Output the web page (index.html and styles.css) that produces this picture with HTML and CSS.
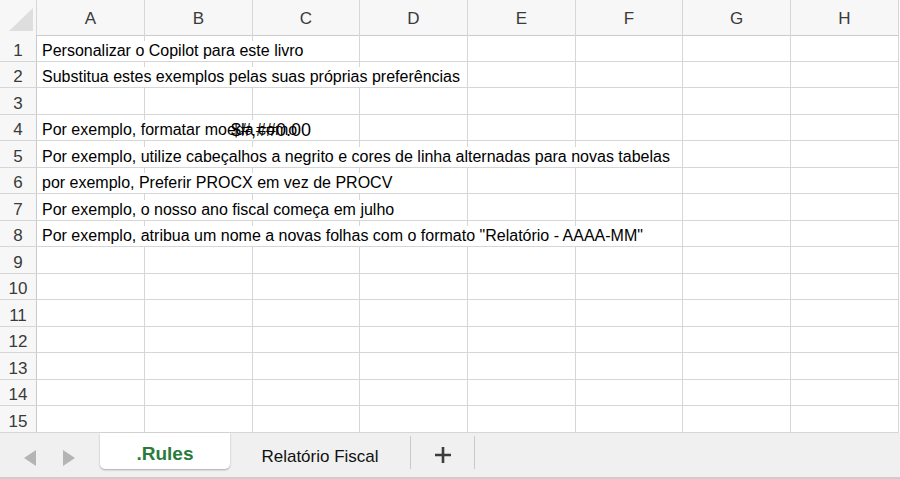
FILE: index.html
```html
<!DOCTYPE html>
<html>
    <head>
        <meta charset="utf-8">
        <title>.Rules</title>
        <link rel="stylesheet" href="styles.css">
    </head>
    <body>
        <div class="sheet">
            <div class="row head">
                <div class="corner">
                    <svg width="37" height="35" viewBox="0 0 37 35"><polygon points="33,8 33,31 9,31" fill="#dedede"/></svg>
                </div>
                <div class="ch">A</div><div class="ch">B</div><div class="ch">C</div><div class="ch">D</div>
                <div class="ch">E</div><div class="ch">F</div><div class="ch">G</div><div class="ch">H</div>
            </div>

            <div class="row">
                <div class="rh">1</div>
                <div class="c"><span class="txt">Personalizar o Copilot para este livro</span></div>
                <div class="c"></div><div class="c"></div><div class="c"></div><div class="c"></div><div class="c"></div><div class="c"></div><div class="c"></div>
            </div>
            <div class="row">
                <div class="rh">2</div>
                <div class="c"><span class="txt">Substitua estes exemplos pelas suas próprias preferências</span></div>
                <div class="c"></div><div class="c"></div><div class="c"></div><div class="c"></div><div class="c"></div><div class="c"></div><div class="c"></div>
            </div>
            <div class="row">
                <div class="rh">3</div>
                <div class="c"></div><div class="c"></div><div class="c"></div><div class="c"></div><div class="c"></div><div class="c"></div><div class="c"></div><div class="c"></div>
            </div>
            <div class="row">
                <div class="rh">4</div>
                <div class="c"><span class="txt">Por exemplo, formatar moeda como</span></div>
                <div class="c"><span class="fmt">$#,##0.00</span></div>
                <div class="c"></div><div class="c"></div><div class="c"></div><div class="c"></div><div class="c"></div><div class="c"></div>
            </div>
            <div class="row">
                <div class="rh">5</div>
                <div class="c"><span class="txt">Por exemplo, utilize cabeçalhos a negrito e cores de linha alternadas para novas tabelas</span></div>
                <div class="c"></div><div class="c"></div><div class="c"></div><div class="c"></div><div class="c"></div><div class="c"></div><div class="c"></div>
            </div>
            <div class="row">
                <div class="rh">6</div>
                <div class="c"><span class="txt">por exemplo, Preferir PROCX em vez de PROCV</span></div>
                <div class="c"></div><div class="c"></div><div class="c"></div><div class="c"></div><div class="c"></div><div class="c"></div><div class="c"></div>
            </div>
            <div class="row">
                <div class="rh">7</div>
                <div class="c"><span class="txt">Por exemplo, o nosso ano fiscal começa em julho</span></div>
                <div class="c"></div><div class="c"></div><div class="c"></div><div class="c"></div><div class="c"></div><div class="c"></div><div class="c"></div>
            </div>
            <div class="row">
                <div class="rh">8</div>
                <div class="c"><span class="txt">Por exemplo, atribua um nome a novas folhas com o formato "Relatório - AAAA-MM"</span></div>
                <div class="c"></div><div class="c"></div><div class="c"></div><div class="c"></div><div class="c"></div><div class="c"></div><div class="c"></div>
            </div>
            <div class="row"><div class="rh">9</div><div class="c"></div><div class="c"></div><div class="c"></div><div class="c"></div><div class="c"></div><div class="c"></div><div class="c"></div><div class="c"></div></div>
            <div class="row"><div class="rh">10</div><div class="c"></div><div class="c"></div><div class="c"></div><div class="c"></div><div class="c"></div><div class="c"></div><div class="c"></div><div class="c"></div></div>
            <div class="row"><div class="rh">11</div><div class="c"></div><div class="c"></div><div class="c"></div><div class="c"></div><div class="c"></div><div class="c"></div><div class="c"></div><div class="c"></div></div>
            <div class="row"><div class="rh">12</div><div class="c"></div><div class="c"></div><div class="c"></div><div class="c"></div><div class="c"></div><div class="c"></div><div class="c"></div><div class="c"></div></div>
            <div class="row"><div class="rh">13</div><div class="c"></div><div class="c"></div><div class="c"></div><div class="c"></div><div class="c"></div><div class="c"></div><div class="c"></div><div class="c"></div></div>
            <div class="row"><div class="rh">14</div><div class="c"></div><div class="c"></div><div class="c"></div><div class="c"></div><div class="c"></div><div class="c"></div><div class="c"></div><div class="c"></div></div>
            <div class="row"><div class="rh">15</div><div class="c"></div><div class="c"></div><div class="c"></div><div class="c"></div><div class="c"></div><div class="c"></div><div class="c"></div><div class="c"></div></div>
        </div>

        <div class="tabs">
            <div class="nav">
                <svg width="14" height="18" viewBox="0 0 14 18"><polygon points="13,1 13,17 1,9" fill="#b4b4b4"/></svg>
                <svg width="14" height="18" viewBox="0 0 14 18"><polygon points="1,1 1,17 13,9" fill="#b4b4b4"/></svg>
            </div>
            <div class="tab active">.Rules</div>
            <div class="tab">Relatório Fiscal</div>
            <div class="tab add">
                <svg width="18" height="18" viewBox="0 0 18 18"><path d="M9 1v16M1 9h16" stroke="#3c3c3c" stroke-width="2.6"/></svg>
            </div>
        </div>
    </body>
</html>
```

FILE: styles.css
```css
html, body {
    margin: 0;
    padding: 0;
    background: #fff;
    font-family: "Liberation Sans", Arial, sans-serif;
    overflow: hidden;
}

/* grade da folha */
.sheet {
    width: 900px;
}
.row {
    display: grid;
    grid-template-columns: 37px 108px 108px 107px 108px 108px 107px 108px 108px;
    height: 26.5px;
}
.row.head {
    height: 35px;
}
.row > div {
    box-sizing: border-box;
    border-right: 1px solid #d6d6d6;
    border-bottom: 1px solid #d6d6d6;
}
.corner, .ch, .rh {
    background: #f7f7f7;
    color: #3a3a3a;
    font-size: 17px;
}
.corner svg {
    display: block;
}
.head > div {
    border-bottom-color: #cbcbcb;
}
.ch {
    display: flex;
    justify-content: center;
    align-items: center;
    padding-top: 3px;
}
.rh {
    display: flex;
    justify-content: center;
    align-items: flex-end;
    line-height: 19px;
    padding-bottom: 1px;
    border-right-color: #cbcbcb !important;
}
.c {
    display: flex;
    align-items: flex-end;
    white-space: nowrap;
    min-width: 0;
    font-size: 16px;
    line-height: 19px;
    color: #000;
}
/* texto que transborda para as células vizinhas */
.txt {
    position: relative;
    z-index: 1;
    padding: 0 2px 1px 5px;
    background: #fff;
}
.c .fmt {
    position: relative;
    z-index: 2;
    margin-left: 86px;
    margin-bottom: 0;
    font-size: 18px;
    line-height: 20px;
}

/* separadores das folhas */
.tabs {
    display: flex;
    height: 46px;
    box-sizing: border-box;
    background: #f0f0f0;
    border-bottom: 2px solid #cdcdcd;
}
.nav {
    width: 100px;
    display: flex;
    align-items: center;
    gap: 25px;
    padding: 6px 0 0 23px;
    box-sizing: border-box;
}
.nav svg {
    display: block;
}
.tab {
    box-sizing: border-box;
    height: 33px;
    margin-top: 3px;
    display: flex;
    justify-content: center;
    align-items: center;
    font-size: 17px;
    color: #111;
    border-right: 1px solid #c9c9c9;
    padding-top: 9px;
}
.tab.active {
    width: 130px;
    height: 36px;
    margin-top: 0;
    padding-top: 7px;
    background: #fff;
    border-right: none;
    border-radius: 0 0 5px 5px;
    box-shadow: 0 1px 2px rgba(0, 0, 0, 0.3);
    color: #2b7a3b;
    font-weight: bold;
    font-size: 19px;
}
.tab:nth-child(3) {
    width: 181px;
}
.tab.add {
    width: 64px;
    padding-top: 5px;
}
.tab.add svg {
    display: block;
}
```
